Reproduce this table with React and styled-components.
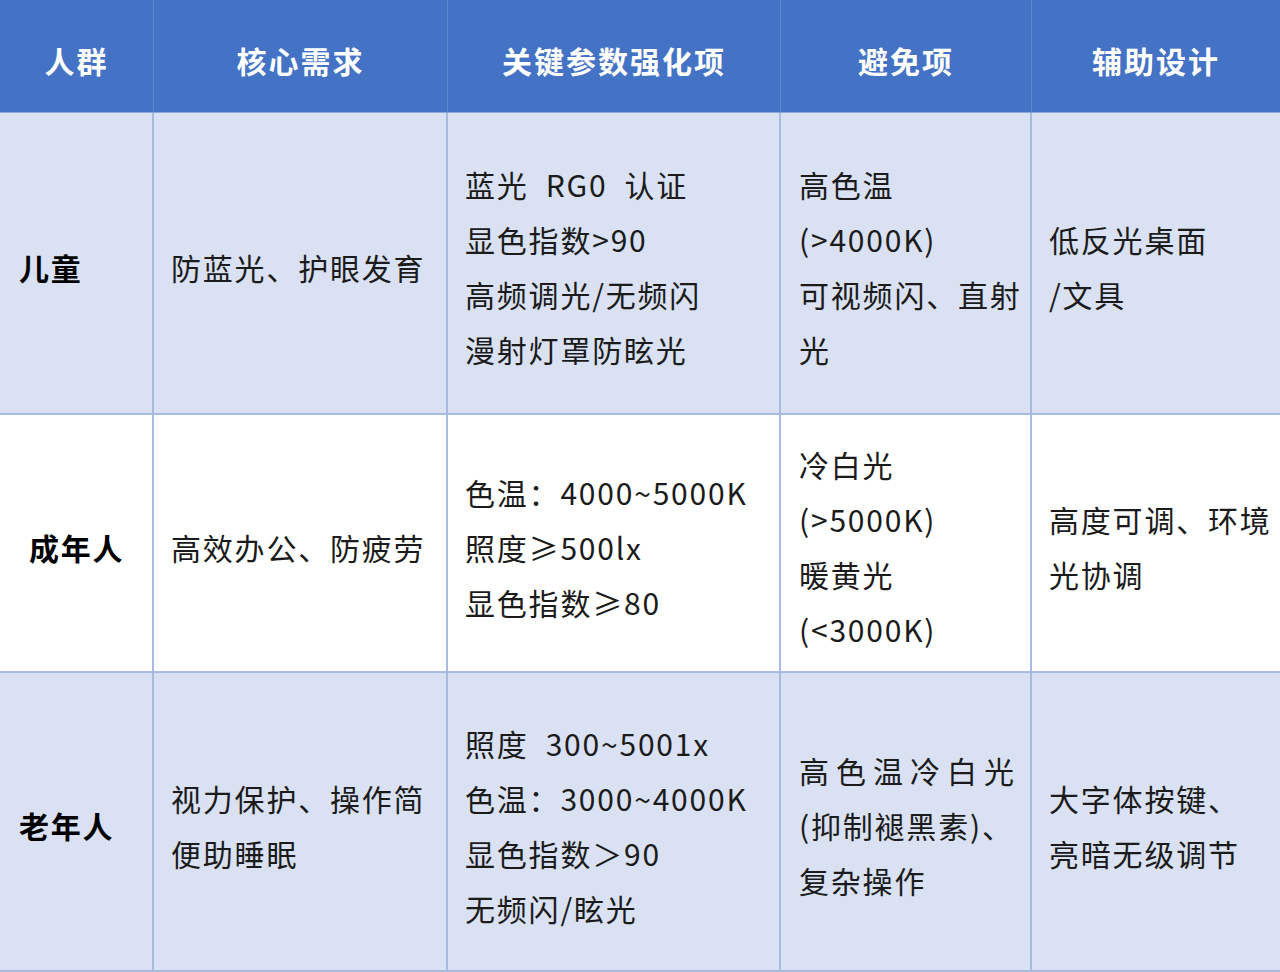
import React from 'react';
import styled, { createGlobalStyle } from 'styled-components';

const GlobalStyle = createGlobalStyle`
    html, body {
        margin: 0;
        padding: 0;
        background: #ffffff;
    }
    body {
        font-family: "Noto Sans CJK SC", "Noto Sans", sans-serif;
    }
`;

const Table = styled.div`
    width: 1280px;
    height: 972px;
    display: grid;
    grid-template-columns: 154px 294px 333px 251px 248px;
    grid-template-rows: 113px 302px 258px 299px;
    background-color: #a7badf;
    overflow: hidden;
`;

const HeadCell = styled.div`
    background-color: #4472c4;
    color: #ffffff;
    font-size: 30px;
    font-weight: 700;
    letter-spacing: 2px;
    display: flex;
    align-items: center;
    justify-content: center;
    padding-top: 8px;
    box-sizing: border-box;
    border-right: ${(p) => (p.$last ? 'none' : '1px solid #5d86cf')};
    border-bottom: 1px solid #8aa6da;
`;

const Cell = styled.div`
    background-color: ${(p) => (p.$striped ? '#d9e1f2' : '#ffffff')};
    color: #1b1b1b;
    font-size: 30px;
    letter-spacing: 1.8px;
    line-height: 55px;
    display: flex;
    flex-direction: column;
    justify-content: center;
    padding: 8px 0 0 ${(p) => p.$pad || 17}px;
    border-right: ${(p) => (p.$last ? 'none' : '2px solid #a7badf')};
    border-bottom: 2px solid #a7badf;
    box-sizing: border-box;
    white-space: pre;
`;

const GroupCell = styled(Cell)`
    font-weight: 700;
    color: #000000;
`;

const Wide = styled.span`
    letter-spacing: ${(p) => p.$spacing || 2}px;
`;

const headers = ['人群', '核心需求', '关键参数强化项', '避免项', '辅助设计'];

const rows = [
    {
        striped: true,
        group: '儿童',
        groupPad: 19,
        need: ['防蓝光、护眼发育'],
        params: ['蓝光  RG0  认证', '显色指数>90', '高频调光/无频闪', '漫射灯罩防眩光'],
        avoid: ['高色温', '(>4000K)', '可视频闪、直射', '光'],
        aid: ['低反光桌面', '/文具'],
    },
    {
        striped: false,
        group: '成年人',
        groupPad: 29,
        need: ['高效办公、防疲劳'],
        params: ['色温：4000~5000K', '照度≥500lx', '显色指数≥80'],
        avoid: ['冷白光', '(>5000K)', '暖黄光', '(<3000K)'],
        aid: ['高度可调、环境', '光协调'],
    },
    {
        striped: true,
        group: '老年人',
        groupPad: 19,
        need: ['视力保护、操作简', '便助睡眠'],
        params: ['照度  300~5001x', '色温：3000~4000K', '显色指数＞90', '无频闪/眩光'],
        avoid: [<Wide $spacing={7}>高色温冷白光</Wide>, '(抑制褪黑素)、', '复杂操作'],
        aid: ['大字体按键、', '亮暗无级调节'],
    },
];

const Lines = ({ items }) => items.map((t, i) => <div key={i}>{t}</div>);

const App = () => {
    return (
        <>
            <GlobalStyle />
            <Table>
                {headers.map((h, i) => (
                    <HeadCell key={h} $last={i === headers.length - 1}>
                        {h}
                    </HeadCell>
                ))}
                {rows.map((r) => (
                    <React.Fragment key={r.group}>
                        <GroupCell $striped={r.striped} $pad={r.groupPad}>
                            {r.group}
                        </GroupCell>
                        <Cell $striped={r.striped} $pad={17}>
                            <Lines items={r.need} />
                        </Cell>
                        <Cell $striped={r.striped} $pad={17}>
                            <Lines items={r.params} />
                        </Cell>
                        <Cell $striped={r.striped} $pad={18}>
                            <Lines items={r.avoid} />
                        </Cell>
                        <Cell $striped={r.striped} $pad={17} $last>
                            <Lines items={r.aid} />
                        </Cell>
                    </React.Fragment>
                ))}
            </Table>
        </>
    );
};

export default App;
